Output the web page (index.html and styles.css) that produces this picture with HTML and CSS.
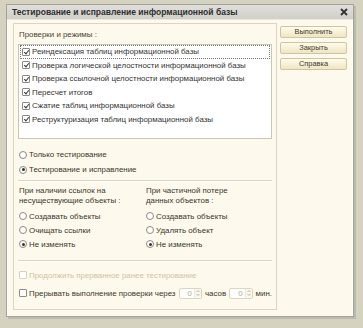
FILE: index.html
```html
<!DOCTYPE html>
<html lang="ru">
<head>
<meta charset="utf-8">
<title>Тестирование и исправление информационной базы</title>
<link rel="stylesheet" href="styles.css">
</head>
<body>
<div class="window">
  <div class="titlebar">
    <span class="title">Тестирование и исправление информационной базы</span>
    <svg class="close" width="8" height="8" viewBox="0 0 8 8"><path d="M1 1L7 7M7 1L1 7" stroke="#333" stroke-width="1.8"/></svg>
  </div>
  <div class="body">
    <div class="group">
      <div class="caption">Проверки и режимы :</div>
      <div class="list">
        <div class="item focus"><span class="cb checked"></span>Реиндексация таблиц информационной базы</div>
        <div class="item"><span class="cb checked"></span>Проверка логической целостности информационной базы</div>
        <div class="item"><span class="cb checked"></span>Проверка ссылочной целостности информационной базы</div>
        <div class="item"><span class="cb checked"></span>Пересчет итогов</div>
        <div class="item"><span class="cb checked"></span>Сжатие таблиц информационной базы</div>
        <div class="item"><span class="cb checked"></span>Реструктуризация таблиц информационной базы</div>
      </div>
      <div class="modes">
        <div class="row"><span class="rb"></span>Только тестирование</div>
        <div class="row"><span class="rb on"></span>Тестирование и исправление</div>
      </div>
      <div class="sep"></div>
      <div class="cols">
        <div class="col">
          <div class="ctitle">При наличии ссылок на<br>несуществующие объекты :</div>
          <div class="row r"><span class="rb"></span>Создавать объекты</div>
          <div class="row r"><span class="rb"></span>Очищать ссылки</div>
          <div class="row r"><span class="rb on"></span>Не изменять</div>
        </div>
        <div class="col">
          <div class="ctitle">При частичной потере<br>данных объектов :</div>
          <div class="row r"><span class="rb"></span>Создавать объекты</div>
          <div class="row r"><span class="rb"></span>Удалять объект</div>
          <div class="row r"><span class="rb on"></span>Не изменять</div>
        </div>
      </div>
      <div class="sep sep2"></div>
      <div class="row cont disabled"><span class="cb dis"></span>Продолжить прерванное ранее тестирование</div>
      <div class="row stop"><span class="cb"></span>Прерывать выполнение проверки через
        <span class="spin"><span class="val">0</span><span class="arr"><svg width="4" height="8" viewBox="0 0 4 8"><path d="M0.5 3L2 1.5L3.5 3M0.5 5L2 6.5L3.5 5" stroke="#a9a28a" stroke-width="0.8" fill="none"/></svg></span></span>
        <span class="unit">часов</span>
        <span class="spin"><span class="val">0</span><span class="arr"><svg width="4" height="8" viewBox="0 0 4 8"><path d="M0.5 3L2 1.5L3.5 3M0.5 5L2 6.5L3.5 5" stroke="#a9a28a" stroke-width="0.8" fill="none"/></svg></span></span>
        <span class="unit">мин.</span>
      </div>
    </div>
    <div class="buttons">
      <div class="btn">Выполнить</div>
      <div class="btn">Закрыть</div>
      <div class="btn">Справка</div>
    </div>
  </div>
</div>
</body>
</html>
```
FILE: styles.css
```css
html, body {
  margin: 0;
  padding: 0;
}
body {
  background: #d5d3bf;
  width: 363px;
  height: 328px;
  overflow: hidden;
  font-family: "Liberation Sans", Arial, sans-serif;
  font-size: 7.9px;
  color: #3b372c;
}
.window {
  margin: 4px 0 0 6px;
  width: 348px;
  height: 313px;
  box-sizing: border-box;
  border: 1px solid #a3a29c;
  background: #fdf9ec;
  box-shadow: 2px 2px 0 #bdbba9;
  display: flex;
  flex-direction: column;
}
.titlebar {
  height: 14px;
  flex: none;
  background: linear-gradient(#e0dfdb, #d0cfca);
  display: flex;
  align-items: center;
  justify-content: space-between;
  padding: 0 5px 0 5px;
}
.title {
  font-weight: bold;
  font-size: 8.5px;
  color: #2e2e2e;
}
.close {
  display: block;
}
.body {
  flex: 1;
  display: flex;
  gap: 3px;
  padding: 3px 6px 6px 6px;
  border-top: 1px solid #ece8da;
  box-shadow: inset 1px 0 0 #ffffff, inset -1px 0 0 #ffffff;
}
.group {
  width: 264px;
  box-sizing: border-box;
  border: 1px solid #dcd6c0;
  padding: 4px 4px 8px 4px;
  display: flex;
  flex-direction: column;
}
.caption {
  height: 13px;
  line-height: 13px;
  padding-left: 1px;
  color: #4d4330;
}
.list {
  margin-top: 3px;
  height: 95px;
  box-sizing: border-box;
  background: #ffffff;
  border: 1px solid #cbc6b3;
  padding: 0 1px;
}
.item {
  height: 13.5px;
  display: flex;
  align-items: center;
  padding-left: 2px;
  box-sizing: border-box;
  white-space: nowrap;
  color: #333;
}
.item.focus {
  outline: 1px dotted #777;
  outline-offset: -1px;
}
.cb {
  width: 8px;
  height: 8px;
  flex: none;
  box-sizing: border-box;
  border: 1px solid #8d8a7f;
  border-radius: 1px;
  background: #fff;
  margin-right: 2px;
  position: relative;
}
.cb.checked::after {
  content: "";
  position: absolute;
  left: 1.5px;
  top: 0px;
  width: 2px;
  height: 4px;
  border: solid #3a3a3a;
  border-width: 0 1.4px 1.4px 0;
  transform: rotate(40deg);
}
.cb.dis {
  border-color: #d8d2bd;
}
.modes {
  margin-top: 8px;
}
.row {
  height: 15px;
  display: flex;
  align-items: center;
  white-space: nowrap;
  padding-left: 1px;
}
.rb {
  width: 8px;
  height: 8px;
  flex: none;
  box-sizing: border-box;
  border: 1px solid #8d8a7f;
  border-radius: 50%;
  background: #fff;
  margin-right: 2px;
  position: relative;
}
.rb.on::after {
  content: "";
  position: absolute;
  left: 1.5px;
  top: 1.5px;
  width: 3px;
  height: 3px;
  border-radius: 50%;
  background: #333;
}
.sep {
  margin-top: 3px;
  height: 1px;
  background: #dcd6c0;
  border-bottom: 1px solid #ffffff;
}
.cols {
  display: flex;
  margin-top: 4px;
}
.col {
  width: 127px;
  display: flex;
  flex-direction: column;
}
.ctitle {
  line-height: 9.5px;
  padding-left: 1px;
  margin-bottom: 4px;
}
.row.r {
  height: 14px;
}
.sep2 {
  margin-top: 9px;
}
.cont {
  margin-top: 6px;
  height: 14px;
}
.disabled {
  color: #cdc4a4;
}
.stop {
  margin-top: 3px;
  height: 16px;
}
.spin {
  display: inline-flex;
  align-items: center;
  width: 26px;
  height: 11px;
  box-sizing: border-box;
  border: 1px solid #dcd6c0;
  border-radius: 2px;
  background: #fff;
  margin-left: 3px;
  margin-right: 3px;
}
.spin .val {
  flex: 1;
  text-align: right;
  padding-right: 2px;
  color: #b0a88e;
}
.spin .arr {
  width: 6px;
  height: 9px;
  display: flex;
  align-items: center;
  justify-content: center;
  border-left: 1px solid #ece7d6;
  background: #faf7ee;
}
.unit {
  color: #3b372c;
}
.buttons {
  width: 67px;
  display: flex;
  flex-direction: column;
  gap: 4px;
  padding-top: 3px;
}
.btn {
  height: 12px;
  box-sizing: border-box;
  border: 1px solid #cfc59f;
  border-radius: 2px;
  background: linear-gradient(#fffcec, #efe5c3);
  text-align: center;
  line-height: 10px;
  color: #3b372c;
  font-size: 7.4px;
}
```
